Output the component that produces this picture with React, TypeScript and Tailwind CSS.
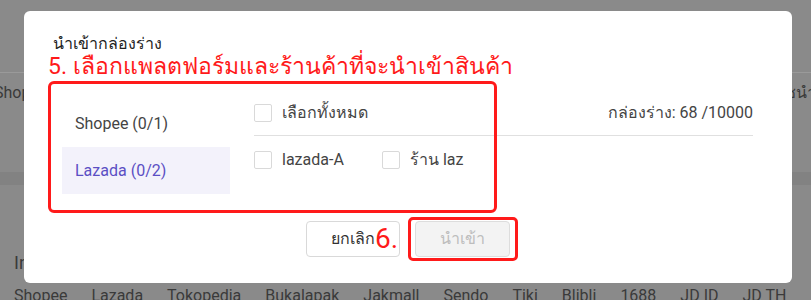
import React from "react";

const platforms = ["Shopee", "Lazada", "Tokopedia", "Bukalapak", "Jakmall", "Sendo", "Tiki", "Blibli", "1688", "JD ID", "JD TH"];

const Box: React.FC = () => (
	<span className="inline-block w-[18px] h-[18px] border border-[#d9d9d9] rounded-[2px] bg-white shrink-0" />
);

export default function App() {
	return (
		<div className="relative w-[811px] h-[300px] overflow-hidden bg-[#8a8a8a] font-['Roboto','Noto_Sans',sans-serif]">
			{/* page behind the overlay */}
			<div className="h-[73px] border-b border-[#9a9a9a]" />
			<div className="flex justify-between h-[40px] items-center text-[16px] text-[#3a3a3a]">
				<span className="-ml-[6px]">Shopee</span>
				<span className="mr-[-30px]">ซนำเข้า</span>
			</div>
			<div className="h-[59px]" />
			<div className="h-[13px] bg-[#828282]" />
			<div className="pl-[14px] pt-[69px] text-[18px] text-[#3a3a3a] leading-none">In</div>
			<div className="flex gap-[24px] pl-[14px] pt-[12px] text-[16px] text-[#3a3a3a] whitespace-nowrap">
				{platforms.map((p) => (
					<span key={p}>{p}</span>
				))}
			</div>

			{/* modal */}
			<div className="absolute left-[24px] top-[11px] w-[768px] h-[272px] bg-white rounded-[6px] pl-[24px] pr-[39px] pt-[23px]">
				<div className="pl-[5px] text-[16px] leading-[20px] text-[#222]">นำเข้ากล่องร่าง</div>
				<div className="text-[23px] leading-[27px] text-[#ff1a1a] -mt-[1px]">5. เลือกแพลตฟอร์มและร้านค้าที่จะนำเข้าสินค้า</div>
				<div className="relative mt-[1px] h-[132px]">
					<div className="absolute left-0 top-0 w-[449px] h-[132px] border-[3px] border-[#ff1a1a] rounded-[6px]" />
					<div className="flex pt-[19px] pl-[14px]">
						<div className="w-[168px] flex flex-col text-[16px]">
							<div className="h-[47px] flex items-center pl-[13px] text-[#444]">Shopee (0/1)</div>
							<div className="h-[47px] flex items-center pl-[13px] bg-[#f3f2fb] text-[#5b4fc4]">Lazada (0/2)</div>
						</div>
						<div className="flex-1 ml-[24px] -mt-[9px]">
							<div className="flex items-center h-[45px] border-b border-[#e0e0e0] text-[16px] text-[#444]">
								<Box />
								<span className="ml-[10px]">เลือกทั้งหมด</span>
								<span className="ml-auto">กล่องร่าง: 68 /10000</span>
							</div>
							<div className="flex items-center h-[48px] text-[16px] text-[#444]">
								<Box />
								<span className="ml-[10px] w-[100px]">lazada-A</span>
								<Box />
								<span className="ml-[10px]">ร้าน laz</span>
							</div>
						</div>
					</div>
				</div>
				<div className="flex gap-[15px] mt-[8px] ml-[258px]">
					<div className="relative w-[94px] h-[36px] border border-[#d9d9d9] rounded-[4px] flex items-center pl-[24px] text-[16px] text-[#333]">
						ยกเลิก
						<span className="absolute left-[68px] top-[2px] text-[28px] leading-[30px] text-[#ff1a1a]">6.</span>
					</div>
					<div className="relative w-[95px] h-[36px] border border-[#ddd] rounded-[4px] bg-[#f3f3f3] flex items-center justify-center text-[16px] text-[#bdbdbd]">
						นำเข้า
						<span className="absolute -left-[8px] -top-[5px] w-[110px] h-[44px] border-[3px] border-[#ff1a1a] rounded-[5px]" />
					</div>
				</div>
			</div>
		</div>
	);
}
